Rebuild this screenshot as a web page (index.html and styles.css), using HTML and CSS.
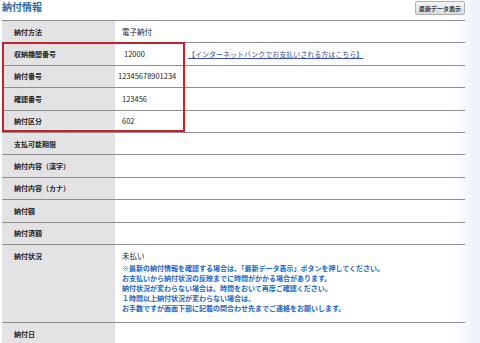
FILE: index.html
```html
<!DOCTYPE html>
<html lang="ja">

<head>
    <meta charset="UTF-8">
    <title>納付情報</title>
    <link rel="stylesheet" href="styles.css">
</head>

<body>
    <div class="page">
        <div class="head">
            <h1 class="title">納付情報</h1>
            <button class="reload">最新データ表示</button>
        </div>
        <div class="info">
            <table class="info-table">
                <tr>
                    <th>納付方法</th>
                    <td>電子納付</td>
                </tr>
                <tr>
                    <th>収納機関番号</th>
                    <td><span class="num">12000</span><a class="bank" href="#">【インターネットバンクでお支払いされる方はこちら】</a></td>
                </tr>
                <tr>
                    <th>納付番号</th>
                    <td class="tight">12345678901234</td>
                </tr>
                <tr>
                    <th>確認番号</th>
                    <td>123456</td>
                </tr>
                <tr>
                    <th>納付区分</th>
                    <td>602</td>
                </tr>
                <tr>
                    <th>支払可能期限</th>
                    <td></td>
                </tr>
                <tr>
                    <th>納付内容（漢字）</th>
                    <td></td>
                </tr>
                <tr>
                    <th>納付内容（カナ）</th>
                    <td></td>
                </tr>
                <tr>
                    <th>納付額</th>
                    <td></td>
                </tr>
                <tr>
                    <th>納付済額</th>
                    <td></td>
                </tr>
                <tr class="status">
                    <th>納付状況</th>
                    <td>
                        未払い
                        <p class="notice">
                            ※最新の納付情報を確認する場合は、「最新データ表示」ボタンを押してください。<br>
                            お支払いから納付状況の反映までに時間がかかる場合があります。<br>
                            納付状況が変わらない場合は、時間をおいて再度ご確認ください。<br>
                            １時間以上納付状況が変わらない場合は、<br>
                            お手数ですが画面下部に記載の問合わせ先までご連絡をお願いします。
                        </p>
                    </td>
                </tr>
                <tr>
                    <th>納付日</th>
                    <td></td>
                </tr>
            </table>
            <!-- 赤枠（強調表示） -->
            <div class="mark"></div>
        </div>
    </div>
</body>

</html>
```

FILE: styles.css
```css
body {
    margin: 0;
    font-family: "Noto Sans CJK JP", "Noto Sans", sans-serif;
    color: #222;
    background: linear-gradient(to right, #ffffff 94%, #edf2f9 100%);
    height: 343px;
    overflow: hidden;
}

.page {
    width: 463px;
    padding-left: 2px;
}

.head {
    display: flex;
    justify-content: space-between;
    align-items: flex-start;
    height: 20px;
}

.title {
    margin: 0;
    font-size: 10px;
    line-height: 14px;
    font-weight: bold;
    color: #2d6aa3;
}

.reload {
    margin-top: 1px;
    height: 14px;
    width: 50px;
    padding: 0;
    font-family: inherit;
    font-size: 6px;
    font-weight: bold;
    color: #333;
    border: 1px solid #b0b0b0;
    border-radius: 2px;
    background: linear-gradient(#f6f6f6, #dadada);
}

.info {
    position: relative;
}

.info-table {
    width: 100%;
    border-collapse: collapse;
    border-top: 1px solid #8e8e8e;
}

.info-table th,
.info-table td {
    height: 21.4px;
    padding: 0;
    border-bottom: 1px solid #8e8e8e;
    line-height: 10px;
    text-align: left;
    vertical-align: middle;
}

.info-table th {
    width: 101px;
    padding-left: 12px;
    background: #e3e3e5;
    font-size: 7px;
    font-weight: bold;
}

.info-table td {
    padding-left: 7px;
    font-size: 7.5px;
}

.info-table td.tight {
    padding-left: 3px;
}

.num {
    display: inline-block;
    width: 64px;
    padding-left: 2px;
}

.bank {
    font-size: 7px;
    color: #3b4f9c;
}

.status th,
.status td {
    height: auto;
    padding-top: 6px;
    padding-bottom: 9px;
    vertical-align: top;
}

.notice {
    margin: 2px 0 0;
    font-size: 7px;
    line-height: 10px;
    font-weight: bold;
    color: #2266c4;
}

.mark {
    position: absolute;
    left: 0;
    top: 22px;
    width: 179px;
    height: 86px;
    border: 2px solid #c5232b;
}
```
